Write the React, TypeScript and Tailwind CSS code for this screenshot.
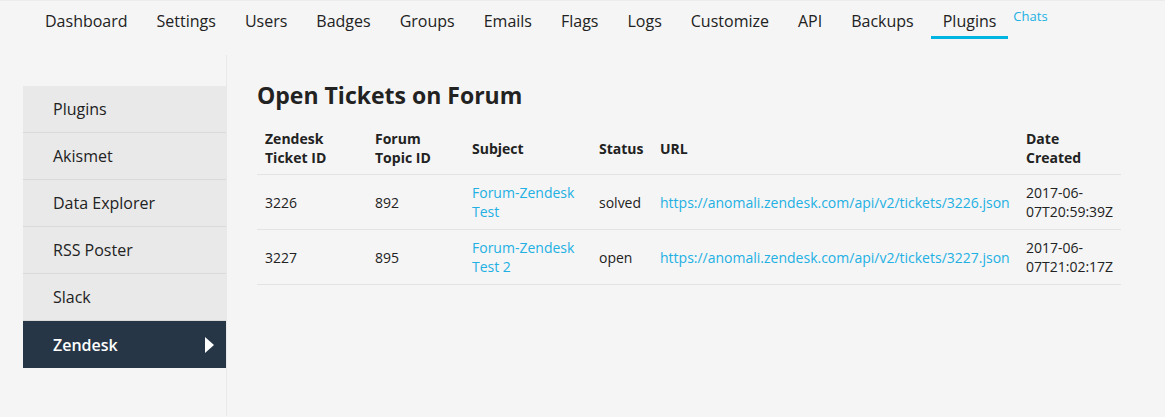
import React from "react";

const navItems = [
  "Dashboard",
  "Settings",
  "Users",
  "Badges",
  "Groups",
  "Emails",
  "Flags",
  "Logs",
  "Customize",
  "API",
  "Backups",
  "Plugins",
];

const pluginLinks = ["Plugins", "Akismet", "Data Explorer", "RSS Poster", "Slack", "Zendesk"];

const tickets = [
  {
    id: "3226",
    topic: "892",
    subject: "Forum-Zendesk Test",
    status: "solved",
    url: "https://anomali.zendesk.com/api/v2/tickets/3226.json",
    created: "2017-06-07T20:59:39Z",
  },
  {
    id: "3227",
    topic: "895",
    subject: "Forum-Zendesk Test 2",
    status: "open",
    url: "https://anomali.zendesk.com/api/v2/tickets/3227.json",
    created: "2017-06-07T21:02:17Z",
  },
];

export default function App() {
  return (
    <div
      className="min-h-[417px] bg-[#f5f5f5] text-[#222222]"
      style={{ fontFamily: '"Open Sans", "DejaVu Sans", sans-serif' }}
    >
      {/* admin nav */}
      <nav className="flex items-start gap-[5px] pl-[33px] border-t border-[#ececec]">
        {navItems.map((item) => (
          <a
            key={item}
            className={`px-3 pt-[8px] pb-[3px] text-[16px] leading-6 border-b-[3px] ${
              item === "Plugins" ? "border-[#00b5e2]" : "border-transparent"
            }`}
          >
            {item}
          </a>
        ))}
        <a className="pt-[5px] text-[13px] leading-5 text-[#22b0e3]">Chats</a>
      </nav>

      <div className="flex mt-[16px]">
        {/* plugin sidebar */}
        <div className="w-[227px] shrink-0 pt-[31px] pl-[23px] border-r border-[#e8e8e8] min-h-[361px]">
          <ul className="w-[203px]">
            {pluginLinks.map((p) => {
              const active = p === "Zendesk";
              return (
                <li
                  key={p}
                  className={`flex items-center justify-between h-[47px] pl-[30px] pr-[12px] text-[16px] ${
                    active
                      ? "bg-[#263646] text-white font-semibold h-[46px]"
                      : "bg-[#e9e9e9] border-b border-[#dadada]"
                  }`}
                >
                  <span>{p}</span>
                  {active && (
                    <svg width="9" height="16" viewBox="0 0 9 16">
                      <path d="M0 0 L9 8 L0 16 Z" fill="white" />
                    </svg>
                  )}
                </li>
              );
            })}
          </ul>
        </div>

        {/* content */}
        <div className="pl-[30px] pt-[25px]">
          <h2 className="text-[23px] leading-[30px] font-bold mb-[10px]">Open Tickets on Forum</h2>
          <table className="w-[864px] table-fixed text-[14px] leading-[19px] text-left">
            <colgroup>
              <col className="w-[110px]" />
              <col className="w-[97px]" />
              <col className="w-[127px]" />
              <col className="w-[61px]" />
              <col className="w-[366px]" />
              <col className="w-[103px]" />
            </colgroup>
            <thead>
              <tr className="border-b border-[#e3e3e3] align-middle">
                <th className="px-2 pt-[9px] pb-[7px] font-bold">Zendesk Ticket ID</th>
                <th className="px-2 pt-[9px] pb-[7px] font-bold">Forum Topic ID</th>
                <th className="px-2 pt-[9px] pb-[7px] font-bold">Subject</th>
                <th className="px-2 pt-[9px] pb-[7px] font-bold">Status</th>
                <th className="px-2 pt-[9px] pb-[7px] font-bold">URL</th>
                <th className="pl-2 pr-0 pt-[9px] pb-[7px] font-bold">
                  <div className="w-[80px]">Date Created</div>
                </th>
              </tr>
            </thead>
            <tbody>
              {tickets.map((t) => (
                <tr key={t.id} className="border-b border-[#e3e3e3] align-middle">
                  <td className="px-2 py-2">{t.id}</td>
                  <td className="px-2 py-2">{t.topic}</td>
                  <td className="px-2 py-2 text-[#22b0e3]">{t.subject}</td>
                  <td className="px-2 py-2">{t.status}</td>
                  <td className="px-2 py-2 text-[#22b0e3] whitespace-nowrap">{t.url}</td>
                  <td className="pl-2 pr-0 py-2">{t.created}</td>
                </tr>
              ))}
            </tbody>
          </table>
        </div>
      </div>
    </div>
  );
}
